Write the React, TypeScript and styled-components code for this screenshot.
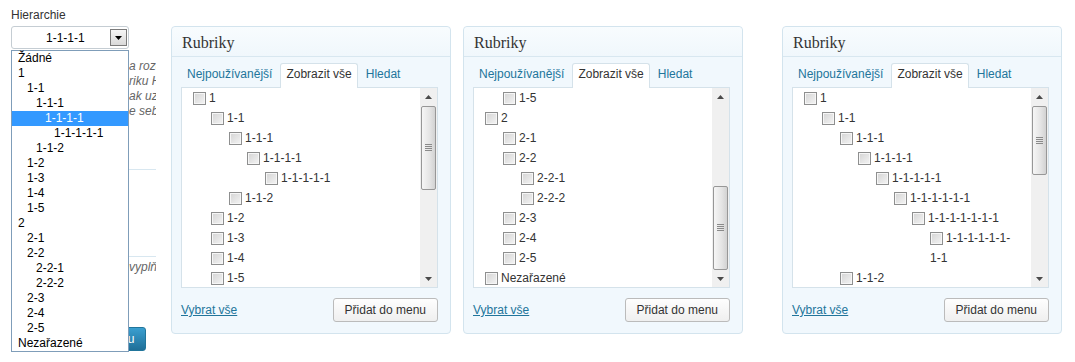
import React from 'react';
import styled, {createGlobalStyle} from 'styled-components';

const GlobalStyle = createGlobalStyle`
  html, body {
    margin: 0;
    padding: 0;
    background: #ffffff;
  }
  body {
    font-family: "Liberation Sans", Arial, sans-serif;
    font-size: 12px;
    color: #333333;
  }
  * {
    box-sizing: border-box;
  }
`;

type Cat = {name: string; level: number};

const toCat = (name: string): Cat => ({name, level: name.split('-').length - 1});

const ALL = [
  '1', '1-1', '1-1-1', '1-1-1-1', '1-1-1-1-1', '1-1-2', '1-2', '1-3', '1-4', '1-5',
  '2', '2-1', '2-2', '2-2-1', '2-2-2', '2-3', '2-4', '2-5', 'Nezařazené',
].map(toCat);

const DEEP = [
  '1', '1-1', '1-1-1', '1-1-1-1', '1-1-1-1-1', '1-1-1-1-1-1', '1-1-1-1-1-1-1',
  '1-1-1-1-1-1-1-1', '1-1-2',
].map(toCat);

const OPTIONS = [toCat('Žádné'), ...ALL];

const Page = styled.div`
  display: flex;
  align-items: flex-start;
  height: 362px;
  overflow: hidden;
`;

/* ---------- left form column ---------- */

const LeftColumn = styled.div`
  flex: none;
  width: 156px;
  height: 362px;
  padding: 7px 0 0 11px;
  overflow: hidden;
`;

const FieldLabel = styled.div`
  line-height: 16px;
  margin-bottom: 3px;
  color: #333;
`;

const SelectWrap = styled.div`
  position: relative;
  width: 118px;
`;

const SelectBox = styled.div`
  display: flex;
  align-items: center;
  height: 23px;
  border: 1px solid #c5cdd3;
  border-radius: 3px;
  background: #fff;
  padding-right: 1px;
`;

const SelectValue = styled.span`
  flex: 1;
  padding-left: 34px;
  color: #000;
`;

const SelectArrow = styled.span`
  display: flex;
  align-items: center;
  justify-content: center;
  width: 17px;
  height: 17px;
  border: 1px solid #7b7b7b;
  background: linear-gradient(#f6f6f6, #d9d9d9);
  padding-top: 1px;
`;

const DropList = styled.ul`
  position: absolute;
  top: 24px;
  left: 0;
  z-index: 5;
  width: 118px;
  margin: 0;
  padding: 0;
  list-style: none;
  border: 1px solid #7f9db9;
  background: #fff;
`;

const DropItem = styled.li<{$level: number; $selected?: boolean}>`
  height: 15px;
  line-height: 15px;
  padding-left: ${p => 6 + p.$level * 9}px;
  white-space: nowrap;
  color: ${p => (p.$selected ? '#fff' : '#000')};
  background: ${p => (p.$selected ? '#3399ff' : 'transparent')};
`;

const Hint = styled.div<{$top: number}>`
  margin-top: ${p => p.$top}px;
  padding-left: 118px;
  font-style: italic;
  line-height: 15px;
  color: #666;
  white-space: nowrap;
`;

const Divider = styled.div<{$top: number}>`
  margin-top: ${p => p.$top}px;
  height: 1px;
  background: #d8e7f0;
`;

const PrimaryButton = styled.button`
  display: block;
  margin-top: 52px;
  height: 24px;
  padding: 0 11px 0 15px;
  border: 1px solid #21759b;
  border-radius: 3px;
  background: linear-gradient(#3a9fd0, #1f6f98);
  color: #fff;
  font-family: inherit;
  font-size: 12px;
`;

/* ---------- category panels ---------- */

const Panel = styled.section<{$gap: number}>`
  flex: none;
  display: flex;
  flex-direction: column;
  width: 280px;
  height: 308px;
  margin: 26px 0 0 ${p => p.$gap}px;
  border: 1px solid #d3e4ee;
  border-radius: 4px;
  background: #f1f8fd;
`;

const PanelHeader = styled.h3`
  display: flex;
  align-items: center;
  height: 30px;
  margin: 0;
  padding: 2px 10px 0;
  border-bottom: 1px solid #d8e7f0;
  border-radius: 4px 4px 0 0;
  background: linear-gradient(#f8fcfe, #f0f7fc);
  font-family: "Liberation Serif", "Times New Roman", serif;
  font-size: 16px;
  font-weight: normal;
  color: #333;
`;

const TabBar = styled.div`
  display: flex;
  align-items: flex-end;
  gap: 2px;
  padding: 6px 12px 0 9px;
`;

const Tab = styled.span<{$active?: boolean}>`
  position: relative;
  z-index: 1;
  height: ${p => (p.$active ? 25 : 24)}px;
  margin-bottom: ${p => (p.$active ? -1 : 0)}px;
  padding: 0 5px;
  line-height: 21px;
  border: 1px solid ${p => (p.$active ? '#d5e2ea' : 'transparent')};
  border-bottom: 0;
  border-radius: 3px 3px 0 0;
  background: ${p => (p.$active ? '#fff' : 'transparent')};
  color: ${p => (p.$active ? '#333' : '#21759b')};
  white-space: nowrap;
`;

const ListBox = styled.div`
  display: flex;
  height: 201px;
  margin: 0 12px 0 9px;
  border: 1px solid #d5e2ea;
  background: #fff;
`;

const TreeViewport = styled.div`
  flex: 1;
  overflow: hidden;
  padding-right: 14px;
`;

const Tree = styled.ul`
  margin: 0;
  padding: 0;
  list-style: none;
`;

const TreeItem = styled.li<{$level: number}>`
  line-height: 20px;
  padding-left: ${p => 11 + p.$level * 18}px;
  color: #333;
`;

const Check = styled.span`
  display: inline-block;
  width: 13px;
  height: 13px;
  margin-right: 3px;
  vertical-align: -3px;
  border: 1px solid #8e8f8f;
  background: linear-gradient(135deg, #d4d4d4, #f4f4f4);
  box-shadow: inset 0 0 0 1px #f6f6f6;
`;

const ScrollTrack = styled.div`
  flex: none;
  display: flex;
  flex-direction: column;
  width: 17px;
  background: #f0f0f0;
`;

const ScrollArrow = styled.div`
  display: flex;
  align-items: center;
  justify-content: center;
  height: 17px;
`;

const ScrollRail = styled.div`
  flex: 1;
  padding: 0 1px;
`;

const Thumb = styled.div<{$top: number; $height: number}>`
  display: flex;
  align-items: center;
  justify-content: center;
  margin-top: ${p => p.$top}px;
  height: ${p => p.$height}px;
  border: 1px solid #979797;
  border-radius: 2px;
  background: linear-gradient(to right, #f6f6f6, #e4e4e4 60%, #d2d2d2);
`;

const Footer = styled.div`
  display: flex;
  align-items: center;
  justify-content: space-between;
  padding: 10px 12px 11px 9px;
`;

const TextLink = styled.a`
  color: #21759b;
  text-decoration: underline;
  cursor: pointer;
`;

const SecondaryButton = styled.button`
  height: 24px;
  padding: 0 11px;
  border: 1px solid #bbbbbb;
  border-radius: 3px;
  background: linear-gradient(#fefefe, #efefef);
  color: #333;
  font-family: inherit;
  font-size: 12px;
`;

const withBreaks = (name: string) =>
  name.split('-').map((part, i, arr) => (
    <React.Fragment key={i}>
      {part}
      {i < arr.length - 1 && (
        <>
          -<wbr />
        </>
      )}
    </React.Fragment>
  ));

const Triangle: React.FC<{up?: boolean; color?: string}> = ({up, color = '#4a4a4a'}) => (
  <svg width="7" height="4" viewBox="0 0 7 4">
    <polygon points={up ? '0,4 7,4 3.5,0' : '0,0 7,0 3.5,4'} fill={color} />
  </svg>
);

const Grip = () => (
  <svg width="7" height="8" viewBox="0 0 7 8">
    {[0.5, 2.5, 4.5, 6.5].map(y => (
      <line key={y} x1="0" x2="7" y1={y} y2={y} stroke="#8a8a8a" strokeWidth="1" />
    ))}
  </svg>
);

type PanelProps = {items: Cat[]; gap: number; thumbTop: number; thumbHeight: number};

// only the rows that fit in the 10-row viewport are rendered
const CategoryPanel: React.FC<PanelProps> = ({items, gap, thumbTop, thumbHeight}) => (
  <Panel $gap={gap}>
    <PanelHeader>Rubriky</PanelHeader>
    <TabBar>
      <Tab>Nejpoužívanější</Tab>
      <Tab $active>Zobrazit vše</Tab>
      <Tab>Hledat</Tab>
    </TabBar>
    <ListBox>
      <TreeViewport>
        <Tree>
          {items.map((cat, i) => (
            <TreeItem key={i} $level={cat.level}>
              <label>
                <Check />
                {withBreaks(cat.name)}
              </label>
            </TreeItem>
          ))}
        </Tree>
      </TreeViewport>
      <ScrollTrack>
        <ScrollArrow><Triangle up /></ScrollArrow>
        <ScrollRail>
          <Thumb $top={thumbTop} $height={thumbHeight}><Grip /></Thumb>
        </ScrollRail>
        <ScrollArrow><Triangle /></ScrollArrow>
      </ScrollTrack>
    </ListBox>
    <Footer>
      <TextLink>Vybrat vše</TextLink>
      <SecondaryButton>Přidat do menu</SecondaryButton>
    </Footer>
  </Panel>
);

export default function App() {
  return (
    <Page>
      <GlobalStyle />
      <LeftColumn>
        <FieldLabel>Hierarchie</FieldLabel>
        <SelectWrap>
          <SelectBox>
            <SelectValue>1-1-1-1</SelectValue>
            <SelectArrow><Triangle color="#000" /></SelectArrow>
          </SelectBox>
          <DropList>
            {OPTIONS.map((opt, i) => (
              <DropItem key={i} $level={opt.level} $selected={opt.name === '1-1-1-1'}>
                {opt.name}
              </DropItem>
            ))}
          </DropList>
        </SelectWrap>
        <Hint $top={10}>
          a rozdíl od štítků mohou mít hierarchii.<br />
          riku Hudba a pod ní podrubriky.<br />
          ak uzpůsobit strukturu webu<br />
          e sebe samostatně.
        </Hint>
        <Divider $top={50} />
        <Divider $top={86} />
        <Hint $top={3}>vyplňte popis rubriky.</Hint>
        <PrimaryButton>Přidat novou rubriku</PrimaryButton>
      </LeftColumn>
      <CategoryPanel items={ALL.slice(0, 10)} gap={15} thumbTop={1} thumbHeight={84} />
      <CategoryPanel items={ALL.slice(9)} gap={12} thumbTop={81} thumbHeight={84} />
      <CategoryPanel items={DEEP} gap={39} thumbTop={1} thumbHeight={69} />
    </Page>
  );
}
